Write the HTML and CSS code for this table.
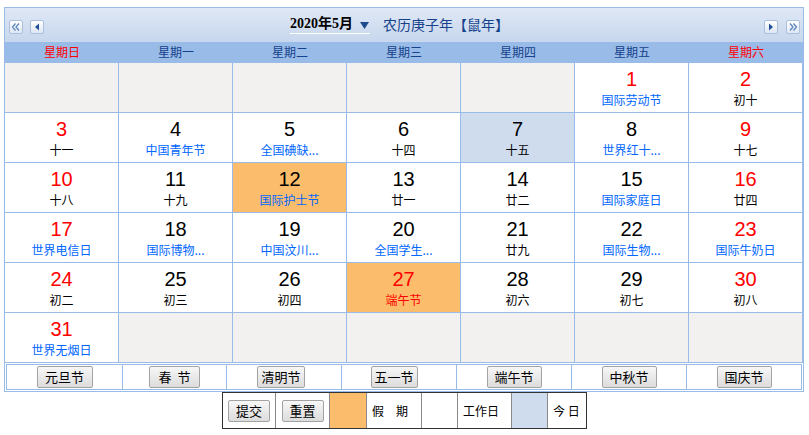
FILE: index.html
```html
<!DOCTYPE html>
<html>
<head>
<meta charset="utf-8">
<link rel="stylesheet" href="styles.css">
</head>
<body>
<div class="page">
  <div class="cal">
    <div class="head">
      <div class="nav nav-left">
        <span class="nbtn"><svg width="12" height="12" viewBox="0 0 12 12"><path d="M5.5 2.5 L2.5 6 L5.5 9.5 M9 2.5 L6 6 L9 9.5" fill="none" stroke="#5f86bd" stroke-width="1.3"/></svg></span>
        <span class="nbtn"><svg width="12" height="12" viewBox="0 0 12 12"><path d="M4 6 L8 2.5 L8 9.5 Z" fill="#1f4f94"/></svg></span>
      </div>
      <div class="title">
        <span class="ym">2020年5月<svg class="tri" width="9" height="8" viewBox="0 0 9 8"><path d="M0 1 L9 1 L4.5 8 Z" fill="#1f4a8c"/></svg></span>
        <span class="lunar-year">农历庚子年【鼠年】</span>
      </div>
      <div class="nav nav-right">
        <span class="nbtn"><svg width="12" height="12" viewBox="0 0 12 12"><path d="M8 6 L4 2.5 L4 9.5 Z" fill="#1f4f94"/></svg></span>
        <span class="nbtn"><svg width="12" height="12" viewBox="0 0 12 12"><path d="M3 2.5 L6 6 L3 9.5 M6.5 2.5 L9.5 6 L6.5 9.5" fill="none" stroke="#5f86bd" stroke-width="1.3"/></svg></span>
      </div>
    </div>
    <div class="weekdays">
      <span class="red">星期日</span><span>星期一</span><span>星期二</span><span>星期三</span><span>星期四</span><span>星期五</span><span class="red">星期六</span>
    </div>
    <div class="grid">
      <div class="cell empty"></div>
      <div class="cell empty"></div>
      <div class="cell empty"></div>
      <div class="cell empty"></div>
      <div class="cell empty"></div>
      <div class="cell"><div class="num red">1</div><div class="lun fest">国际劳动节</div></div>
      <div class="cell"><div class="num red">2</div><div class="lun">初十</div></div>

      <div class="cell"><div class="num red">3</div><div class="lun">十一</div></div>
      <div class="cell"><div class="num">4</div><div class="lun fest">中国青年节</div></div>
      <div class="cell"><div class="num">5</div><div class="lun fest">全国碘缺...</div></div>
      <div class="cell"><div class="num">6</div><div class="lun">十四</div></div>
      <div class="cell today"><div class="num">7</div><div class="lun">十五</div></div>
      <div class="cell"><div class="num">8</div><div class="lun fest">世界红十...</div></div>
      <div class="cell"><div class="num red">9</div><div class="lun">十七</div></div>

      <div class="cell"><div class="num red">10</div><div class="lun">十八</div></div>
      <div class="cell"><div class="num">11</div><div class="lun">十九</div></div>
      <div class="cell holiday"><div class="num">12</div><div class="lun fest">国际护士节</div></div>
      <div class="cell"><div class="num">13</div><div class="lun">廿一</div></div>
      <div class="cell"><div class="num">14</div><div class="lun">廿二</div></div>
      <div class="cell"><div class="num">15</div><div class="lun fest">国际家庭日</div></div>
      <div class="cell"><div class="num red">16</div><div class="lun">廿四</div></div>

      <div class="cell"><div class="num red">17</div><div class="lun fest">世界电信日</div></div>
      <div class="cell"><div class="num">18</div><div class="lun fest">国际博物...</div></div>
      <div class="cell"><div class="num">19</div><div class="lun fest">中国汶川...</div></div>
      <div class="cell"><div class="num">20</div><div class="lun fest">全国学生...</div></div>
      <div class="cell"><div class="num">21</div><div class="lun">廿九</div></div>
      <div class="cell"><div class="num">22</div><div class="lun fest">国际生物...</div></div>
      <div class="cell"><div class="num red">23</div><div class="lun fest">国际牛奶日</div></div>

      <div class="cell"><div class="num red">24</div><div class="lun">初二</div></div>
      <div class="cell"><div class="num">25</div><div class="lun">初三</div></div>
      <div class="cell"><div class="num">26</div><div class="lun">初四</div></div>
      <div class="cell holiday"><div class="num red">27</div><div class="lun red">端午节</div></div>
      <div class="cell"><div class="num">28</div><div class="lun">初六</div></div>
      <div class="cell"><div class="num">29</div><div class="lun">初七</div></div>
      <div class="cell"><div class="num red">30</div><div class="lun">初八</div></div>

      <div class="cell"><div class="num red">31</div><div class="lun fest">世界无烟日</div></div>
      <div class="cell empty"></div>
      <div class="cell empty"></div>
      <div class="cell empty"></div>
      <div class="cell empty"></div>
      <div class="cell empty"></div>
      <div class="cell empty"></div>
    </div>
    <div class="hols">
      <div class="hol-table">
        <div class="hc c1"><button class="btn w56">元旦节</button></div>
        <div class="hc c2"><button class="btn w51">春&nbsp;&nbsp;节</button></div>
        <div class="hc c3"><button class="btn w48 sh3">清明节</button></div>
        <div class="hc c4"><button class="btn w47 sh5">五一节</button></div>
        <div class="hc c5"><button class="btn w55">端午节</button></div>
        <div class="hc c6"><button class="btn w55">中秋节</button></div>
        <div class="hc c7"><button class="btn w55">国庆节</button></div>
      </div>
    </div>
  </div>
  <div class="legend">
    <div class="lc l1"><button class="btn w42">提交</button></div>
    <div class="lc l2"><button class="btn w42">重置</button></div>
    <div class="lc l3 sw-orange"></div>
    <div class="lc l4 txt">假　期</div>
    <div class="lc l5"></div>
    <div class="lc l6 txt">工作日</div>
    <div class="lc l7 sw-blue"></div>
    <div class="lc l8 txt">今 日</div>
  </div>
</div>
</body>
</html>
```

FILE: styles.css
```css
html, body {
  margin: 0;
  padding: 0;
  background: #ffffff;
}
body {
  font-family: "Noto Sans CJK SC", "Liberation Sans", sans-serif;
  font-size: 12px;
  color: #000;
}
.page {
  padding: 7px 0 0 4px;
  width: 800px;
}
.cal {
  width: 798px;
  border: 1px solid #99bbe8;
}
.head {
  height: 34px;
  box-sizing: border-box;
  padding-top: 8px;
  display: flex;
  align-items: flex-start;
  background: linear-gradient(#dfe8f5, #c7d7ed);
}
.nav {
  display: flex;
  width: 39px;
  margin-top: 4px;
}
.nav-left {
  padding-left: 4px;
  gap: 7px;
  width: 35px;
}
.nav-right {
  gap: 8px;
  width: 39px;
  padding-right: 3px;
  justify-content: flex-end;
}
.nbtn {
  width: 12px;
  height: 12px;
  border: 1px solid #aac0dc;
  border-radius: 2px;
  background: linear-gradient(#ffffff, #dde7f4);
  display: flex;
  align-items: center;
  justify-content: center;
}
.nbtn svg { display: block; }
.title {
  flex: 1;
  display: flex;
  justify-content: center;
  align-items: flex-start;
  padding-right: 6px;
}
.ym {
  font-family: "Liberation Serif", "Noto Sans CJK SC", serif;
  font-weight: bold;
  font-size: 14px;
  line-height: 16px;
  padding-bottom: 1px;
  border-bottom: 1px solid #ffffff;
  display: flex;
  align-items: center;
  width: 80px;
}
.ym .tri {
  margin-left: 7px;
  margin-top: 1px;
}
.lunar-year {
  margin-left: 13px;
  font-size: 14px;
  line-height: 16px;
  color: #15428b;
}
.weekdays {
  display: grid;
  grid-template-columns: repeat(7, 114px);
  height: 20px;
  background: #99bbe8;
  color: #15428b;
  font-size: 12px;
  line-height: 20px;
  text-align: center;
}
.weekdays .red { color: #ff0000; }
.grid {
  display: grid;
  grid-template-columns: repeat(7, 113px);
  grid-auto-rows: 49px;
  gap: 1px;
  background: #99bbe8;
  border-top: 1px solid #99bbe8;
  border-bottom: 1px solid #99bbe8;
  padding-right: 1px;
  width: 797px;
}
.cell {
  background: #ffffff;
  text-align: center;
  box-sizing: border-box;
  padding-top: 5px;
}
.cell.empty { background: #f2f1ef; }
.cell.today { background: #cfdcee; }
.cell.holiday { background: #fbbd6b; }
.num {
  font-family: "Liberation Sans", Arial, sans-serif;
  font-size: 20px;
  line-height: 22px;
  color: #000;
}
.lun {
  font-size: 12px;
  line-height: 16px;
  margin-top: 2px;
  color: #000;
}
.lun.fest { color: #0066ff; }
.red { color: #ff0000; }
.num.red, .lun.red { color: #ff0000; }
.hols {
  padding: 1px;
  background: #ffffff;
}
.hol-table {
  display: flex;
  border: 1px solid #99bbe8;
  height: 24px;
  width: 794px;
}
.hc {
  display: flex;
  align-items: center;
  justify-content: center;
  border-left: 1px solid #99bbe8;
  box-sizing: border-box;
  width: 115px;
}
.hc.c1 { border-left: 0; width: 115px; }
.hc.c2 { width: 104px; }
.btn {
  font-family: "Noto Sans CJK SC", sans-serif;
  font-size: 13px;
  line-height: 20px;
  height: 22px;
  padding: 0;
  color: #000;
  border: 1px solid #a3a3a3;
  border-radius: 2px;
  background: linear-gradient(#f7f7f7, #dcdcdc);
  box-sizing: border-box;
}
.w56 { width: 56px; }
.w55 { width: 55px; }
.w51 { width: 51px; }
.w48 { width: 48px; }
.w47 { width: 47px; }
.w42 { width: 42px; }
.sh3 { margin-right: 6px; }
.sh5 { margin-right: 10px; }
.legend {
  margin: 0 0 0 218px;
  display: flex;
  border: 1px solid #333333;
  height: 35px;
  width: 363px;
}
.lc {
  border-left: 1px solid #8a8a8a;
  display: flex;
  align-items: center;
  justify-content: center;
  font-size: 12px;
}
.lc.l1 { border-left: 0; width: 52px; }
.lc.l2 { width: 53px; }
.lc.l3 { width: 36px; }
.lc.l4 { width: 54px; }
.lc.l5 { width: 35px; }
.lc.l6 { width: 53px; }
.lc.l7 { width: 35px; }
.lc.l8 { width: 38px; }
.lc.txt { justify-content: flex-start; padding-left: 5px; box-sizing: border-box; }
.lc.l4.txt { width: 55px; }
.lc.l6.txt { width: 54px; }
.lc.l8.txt { width: 39px; }
.sw-orange { background: #fbbd6b; }
.sw-blue { background: #cfdcee; }
```
